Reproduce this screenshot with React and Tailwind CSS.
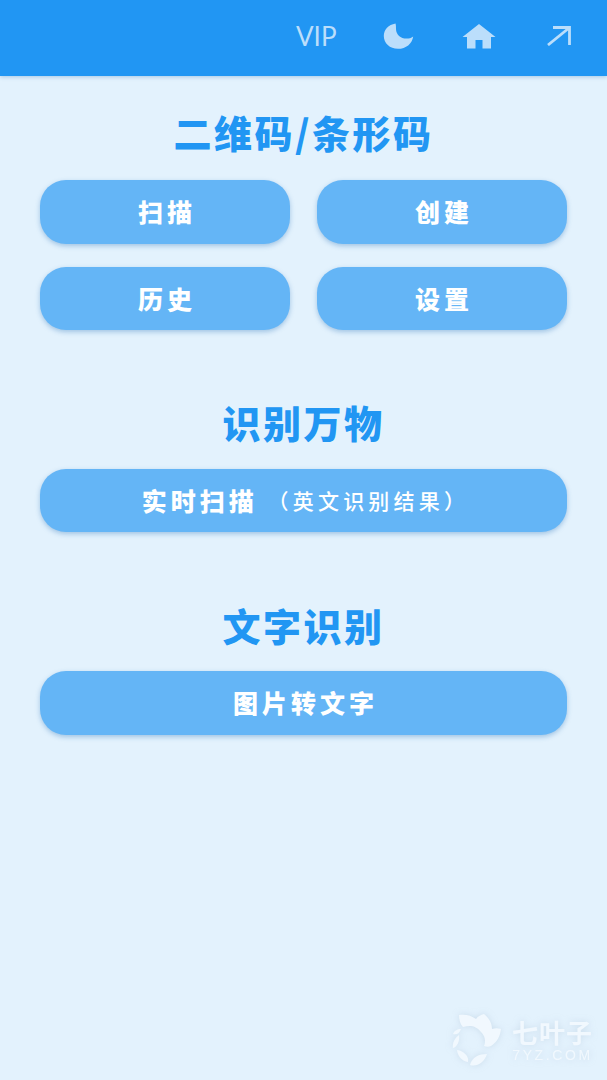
const cjk = { fontFamily: '"Noto Sans CJK SC", "Noto Sans", sans-serif' };

function Btn({ children, className = "" }) {
  return (
    <button className={"flex h-[63.5px] items-center justify-center whitespace-pre rounded-[26px] bg-[#64B5F6] pl-[4px] text-[25px] font-black tracking-[4px] text-white shadow-[0_2px_5px_rgba(33,110,180,0.35)] " + className}>
      {children}
    </button>
  );
}

function Title({ children, className = "" }) {
  return (
    <h2 className={"text-center text-[38px] leading-[48px] font-black tracking-[2.5px] text-[#2196F3] " + className}>{children}</h2>
  );
}

function Moon() {
  return (
    <svg width="31" height="26" viewBox="0 0 31 26">
      <path d="M12.5 0.5C5.5 1.8 0.8 6.6 0.8 13c0 7.2 6 12.8 14.2 12.8 8 0 14.2-5.2 15.2-12.4-2 1.5-4.2 2.2-6.6 2.2-6 0-10.6-4-10.6-9.6 0-2.2 0-4 -.5-5.5z" fill="#BBDEFB" />
    </svg>
  );
}

function Home() {
  return (
    <svg width="34" height="25" viewBox="0 0 34 25">
      <path d="M17 0 33.5 13H29v11.5H20.5V16h-7v8.5H5V13H0.5z" fill="#BBDEFB" />
    </svg>
  );
}

function Arrow() {
  return (
    <svg width="24" height="20" viewBox="0 0 24 20" fill="none" stroke="#BBDEFB" strokeWidth="2.8">
      <path d="M1 19 22 2M6 1.5h16.5V19" />
    </svg>
  );
}

function Watermark() {
  return (
    <div className="absolute right-[14px] bottom-[14px] flex items-center gap-[10px] drop-shadow-[0_0_3px_rgba(180,200,220,0.5)]">
      <svg width="52" height="53" viewBox="0 0 50 53" fill="#F1F8FE">
        <path d="M8 2c6-1 12 0 17 4 2-3 5-4 8-5 5 4 8 9 8 15 3-1 6-1 9 0-1 8-4 13-10 17-2 1-5 1-7 0 2-5 1-10-3-14C25 13 20 12 12 14 9 11 8 6 8 2z" />
        <path d="M10 16c-4 0-7 2-8 5 3 1 6 0 8-5z" />
        <path d="M8 22c-4 3-7 8-6 13 4-1 7-7 6-13z" />
        <path d="M6 37c1 7 5 11 11 12 1-6-4-11-11-12z" />
        <path d="M19 52c7 2 14-2 17-11-8 0-15 3-17 11z" />
      </svg>
      <div className="flex flex-col items-center" style={cjk}>
        <span className="text-[26px] leading-[30px] font-bold tracking-[1px] text-[#F1F8FE]">七叶子</span>
        <span className="mt-[1px] text-[14px] leading-[14px] tracking-[2.6px] text-[#F1F8FE]" style={{ fontFamily: '"Liberation Sans", sans-serif' }}>7YZ.COM</span>
      </div>
    </div>
  );
}

export default function App() {
  return (
    <div className="relative flex h-[1080px] w-[607px] flex-col overflow-hidden bg-[#E3F2FD]" style={cjk}>
      <header className="flex h-[76px] shrink-0 items-center bg-[#2196F3] pb-[4px] pl-[296px] shadow-[0_1px_4px_rgba(33,110,180,0.3)]">
        <span className="w-[42px] text-[26px] leading-none text-[#BBDEFB]" style={{ fontFamily: 'Lato, "Noto Sans", sans-serif' }}>VIP</span>
        <span className="ml-[45px] flex"><Moon /></span>
        <span className="ml-[48px] flex"><Home /></span>
        <span className="ml-[51px] flex"><Arrow /></span>
      </header>
      <main className="flex flex-col px-[40px]">
        <Title className="mt-[32px]">二维码/条形码</Title>
        <div className="mt-[24px] grid grid-cols-2 gap-x-[27px] gap-y-[23px]">
          <Btn>扫描</Btn>
          <Btn>创建</Btn>
          <Btn>历史</Btn>
          <Btn>设置</Btn>
        </div>
        <Title className="mt-[68px]">识别万物</Title>
        <Btn className="mt-[23px] h-[63px]">实时扫描 <span className="text-[21px] font-medium tracking-[4.2px]">（英文识别结果）</span></Btn>
        <Title className="mt-[69px]">文字识别</Title>
        <Btn className="mt-[22px]">图片转文字</Btn>
      </main>
      <Watermark />
    </div>
  );
}
